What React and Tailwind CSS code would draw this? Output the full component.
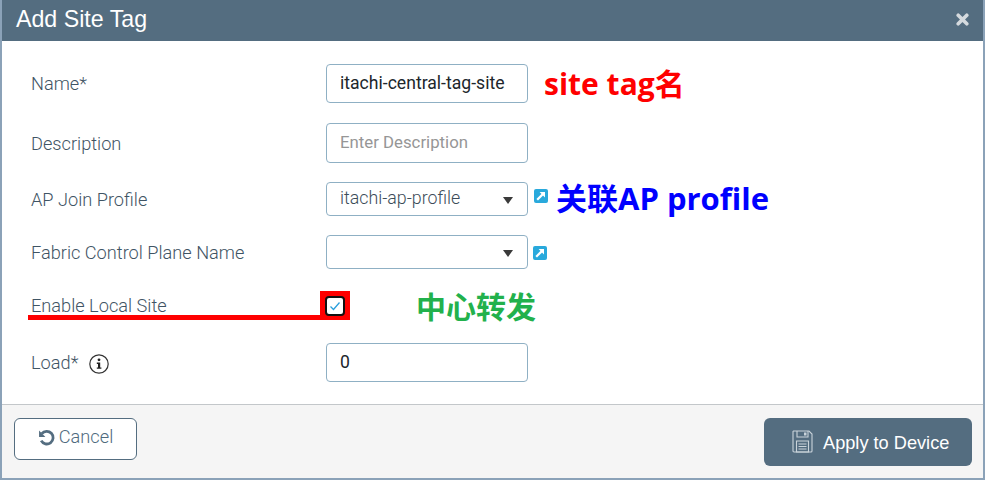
const labelCls = "w-[295px] shrink-0 mt-[1px] text-[18.2px] leading-6 font-light text-[#3f5464] font-['Roboto','Liberation_Sans',sans-serif]";
const boxCls = "w-[202px] shrink-0 rounded-[4px] border border-[#8fb0c4] bg-white flex items-center font-['Roboto','Liberation_Sans',sans-serif]";

function LinkIcon({ className }) {
  return (
    <svg width="14" height="14" viewBox="0 0 14 14" className={className}>
      <rect x="0" y="0" width="14" height="14" rx="2" fill="#29a9dc" />
      <path d="M3.2 10.8 L9.6 4.4" stroke="#fff" strokeWidth="2.2" fill="none" />
      <path d="M5.6 3 H11 V8.4 Z" fill="#fff" />
    </svg>
  );
}

function SelectBox({ value }) {
  return (
    <div className={`${boxCls} h-[34px] pl-[13px] pr-[14px] justify-between`}>
      <span className="text-[17.8px] font-light text-[#3c4c59] -mt-[2px]">{value}</span>
      <svg width="10" height="7" viewBox="0 0 10 7" className="mt-[3px]">
        <path d="M0 0 H10 L5 7 Z" fill="#3a3a3a" />
      </svg>
    </div>
  );
}

export default function App() {
  return (
    <div className="relative w-[985px] h-[480px] flex flex-col bg-white border-l-2 border-r-2 border-b-2 border-[#8ba2b8] overflow-hidden font-['Roboto','Liberation_Sans',sans-serif]">
      <header className="h-[41px] shrink-0 -mx-[2px] bg-[#546d80] flex items-center justify-between pl-4 pr-[16px]">
        <h1 className="text-[23.2px] leading-[38px] text-white font-['Liberation_Sans',sans-serif] -mt-[3px]">Add Site Tag</h1>
        <svg width="13" height="13" viewBox="0 0 13 13" className="-mt-[2px]">
          <path d="M2.2 2.2 L10.8 10.8 M10.8 2.2 L2.2 10.8" stroke="#d5dade" strokeWidth="3.6" strokeLinecap="round" />
        </svg>
      </header>

      <main className="relative flex-1 pl-[29px] pt-[23px] flex flex-col">
        <div className="flex items-center h-[39px]">
          <div className={labelCls}>Name*</div>
          <div className={`${boxCls} h-[39px] pl-[13px] text-[17.6px] text-[#20262b]`}>itachi-central-tag-site</div>
          <div className="ml-[16px] text-[30px] leading-none font-bold text-[#ff0000] font-['Open_Sans','Noto_Sans_CJK_SC',sans-serif]">site tag名</div>
        </div>

        <div className="flex items-center h-[40px] mt-[20px]">
          <div className={labelCls}>Description</div>
          <div className={`${boxCls} h-[40px] pl-[13px] text-[16.8px] text-[#969696]`}>Enter Description</div>
        </div>

        <div className="flex items-center h-[34px] mt-[19px]">
          <div className={labelCls}>AP Join Profile</div>
          <SelectBox value="itachi-ap-profile" />
          <LinkIcon className="ml-[6px] -mt-[6px]" />
          <div className="ml-[8px] -mt-[2px] text-[31px] leading-none font-bold text-[#0000ff] font-['Open_Sans','Noto_Sans_CJK_SC',sans-serif]">关联AP profile</div>
        </div>

        <div className="flex items-center h-[34px] mt-[19px]">
          <div className={labelCls}>Fabric Control Plane Name</div>
          <SelectBox value="" />
          <LinkIcon className="ml-[5px] mt-[2px]" />
        </div>

        <div className="flex items-center h-[29px] mt-[22px]">
          <div className={labelCls}>Enable Local Site</div>
          <div className="-ml-[6px] w-[30px] h-[29px] shrink-0 bg-[#ff0000] flex items-center justify-center">
            <div className="w-[20px] h-[20px] rounded-[4px] border-2 border-[#111] bg-white flex items-center justify-center">
              <svg width="12" height="10" viewBox="0 0 12 10">
                <path d="M1.5 5.5 L4.5 8.5 L10.5 1.5" stroke="#2a9fdc" strokeWidth="1.3" fill="none" />
              </svg>
            </div>
          </div>
          <div className="ml-[66px] -mt-[1px] text-[30px] leading-none font-bold text-[#22b14c] font-['Noto_Sans_CJK_SC',sans-serif]">中心转发</div>
        </div>

        <div className="flex items-center h-[39px] mt-[23px]">
          <div className={`${labelCls} flex items-center gap-[11px]`}>
            <span>Load*</span>
            <svg width="20" height="20" viewBox="0 0 20 20" className="mt-[2px]">
              <circle cx="10" cy="10" r="9.2" fill="#fff" stroke="#333" strokeWidth="1.2" />
              <circle cx="10" cy="5.8" r="1.4" fill="#222" />
              <path d="M7.8 8.6 H11.2 V13.4 H12.4 V14.8 H7.8 V13.4 H9 V10 H7.8 Z" fill="#222" />
            </svg>
          </div>
          <div className={`${boxCls} h-[39px] pl-[13px] text-[17.6px] text-[#20262b]`}>0</div>
        </div>

        <div className="absolute left-[26px] top-[274px] w-[294px] h-[5px] bg-[#ff0000]" />
      </main>

      <footer className="h-[74px] shrink-0 bg-[#f5f5f5] border-t border-[#c3c7ca] flex items-start justify-between pl-[12px] pr-[11px] pt-[13px]">
        <button className="w-[123px] h-[42px] rounded-[6px] border border-[#546d80] bg-white flex items-center justify-center gap-[3px] text-[18.2px] font-light text-[#4f6a7e]">
          <svg width="18" height="18" viewBox="0 0 17 17" className="-mt-[3px]">
            <path d="M3.6 4.4 A6 6 0 1 1 3 11" stroke="#546d80" strokeWidth="2.6" fill="none" />
            <path d="M1 1.5 V7.5 H7 Z" fill="#546d80" />
          </svg>
          <span className="-mt-[5px]">Cancel</span>
        </button>
        <button className="w-[208px] h-[48px] rounded-[6px] bg-[#546d80] flex items-center pl-[28px] gap-[10px] text-[18.2px] text-white font-['Liberation_Sans',sans-serif]">
          <svg width="21" height="23" viewBox="0 0 21 23" className="-mt-[1px]">
            <path d="M1.5 1 H17 L20 4 V21 A1 1 0 0 1 19 22 H2 A1 1 0 0 1 1 21 V1.5 Z" fill="none" stroke="#c9d3da" strokeWidth="1.1" />
            <path d="M5 1 V7 H16 V1" fill="none" stroke="#c9d3da" strokeWidth="1.1" />
            <path d="M12 2.5 H14.5 V5.5 H12 Z" fill="#c9d3da" />
            <path d="M4.5 11 H16.5 V22 H4.5 Z" fill="none" stroke="#c9d3da" strokeWidth="1.1" />
            <path d="M6.5 14 H14.5 M6.5 16.5 H14.5 M6.5 19 H14.5" stroke="#c9d3da" strokeWidth="1" />
          </svg>
          <span className="mt-[4px]">Apply to Device</span>
        </button>
      </footer>
    </div>
  );
}
